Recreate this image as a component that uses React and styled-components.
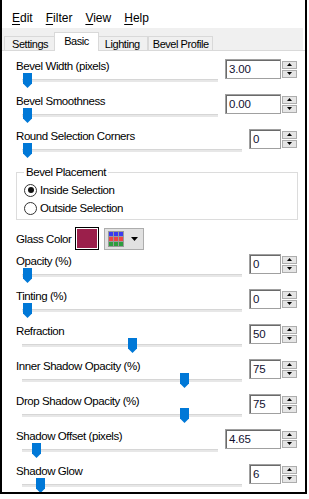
import React from "react";
import styled, { createGlobalStyle } from "styled-components";

const Global = createGlobalStyle`
  html, body { margin: 0; padding: 0; background: #fff; }
  body { font-family: "Liberation Sans", Arial, sans-serif; color: #000; }
`;

const Frame = styled.div`
  width: 307px;
  height: 494px;
  box-sizing: border-box;
  border-left: 2px solid #000;
  border-right: 2px solid #000;
  border-bottom: 2px solid #000;
  background: #fff;
  overflow: hidden;
  display: flex;
  flex-direction: column;
`;

const MenuBar = styled.div`
  display: flex;
  height: 28px;
  box-sizing: border-box;
  padding: 10px 0 0 3.5px;
  font-size: 12px;
  line-height: 16px;
`;

const MenuItem = styled.span`
  padding: 0 6.5px;
  u { text-decoration-thickness: 1px; text-underline-offset: 2px; }
`;

const TabStrip = styled.div`
  display: flex;
  align-items: flex-end;
  height: 22px;
  margin-right: 2px;
  padding-left: 2px;
  box-sizing: border-box;
  background: #f0f0f0;
`;

const Tab = styled.div`
  position: relative;
  box-sizing: border-box;
  height: ${(p) => (p.$active ? 19 : 15)}px;
  margin: 0 ${(p) => (p.$active ? -2 : 0)}px -1px;
  padding: ${(p) =>
    p.$active ? "2px 9px 0" : p.$last ? "1px 3px 0 4px" : "1px 7px 0"};
  border: 1px solid #d9d9d9;
  border-bottom: ${(p) => (p.$active ? "none" : "1px solid #d9d9d9")};
  background: ${(p) => (p.$active ? "#fff" : "#f0f0f0")};
  z-index: ${(p) => (p.$active ? 2 : 1)};
  font-size: 11px;
  letter-spacing: -0.45px;
  line-height: 12px;
  white-space: nowrap;
`;

const Panel = styled.div`
  position: relative;
  z-index: 1;
  flex: 1;
  min-height: 0;
  border-top: 1px solid #d9d9d9;
  padding: 8px 8px 0 14px;
  display: flex;
  flex-direction: column;
`;

const Row = styled.div`
  display: grid;
  grid-template-columns: 1fr auto;
  grid-template-rows: 14px 21px;
  column-gap: 7px;
  flex-shrink: 0;
`;

const Label = styled.div`
  grid-column: 1;
  grid-row: 1;
  font-size: 11.5px;
  letter-spacing: -0.42px;
  line-height: 14px;
  white-space: nowrap;
`;

const SliderArea = styled.div`
  grid-column: 1;
  grid-row: 2;
  position: relative;
  margin-left: 6px;
`;

const Track = styled.div`
  margin-top: 6px;
  height: 3px;
  box-sizing: border-box;
  background: #e7e7e7;
  border-top: 1px solid #d6d6d6;
`;

const ThumbSvg = styled.svg`
  position: absolute;
  top: 0;
  display: block;
`;

const Spin = styled.div`
  grid-column: 2;
  grid-row: 1 / span 2;
  align-self: start;
  display: flex;
  gap: 1px;
  height: 20px;
`;

const SpinField = styled.div`
  width: ${(p) => (p.$wide ? 56 : 32)}px;
  height: 20px;
  box-sizing: border-box;
  border: 1px solid #a0a0a0;
  box-shadow: inset 1px 1px 0 #6a6a6a;
  padding-left: 3px;
  font-size: 11.5px;
  letter-spacing: -0.2px;
  line-height: 19px;
  color: #101030;
`;

const SpinButtons = styled.div`
  display: flex;
  flex-direction: column;
  justify-content: center;
  gap: 1px;
`;

const SpinBtn = styled.div`
  width: 15px;
  height: 8px;
  box-sizing: border-box;
  border: 1px solid #adadad;
  background: #e5e5e5;
  display: flex;
  align-items: center;
  justify-content: center;
`;

const Group = styled.fieldset`
  margin: 1px -1px 0 0;
  padding: 2px 0 2px 7px;
  border: 1px solid #dcdcdc;
  min-width: 0;
  flex-shrink: 0;
`;

const Legend = styled.legend`
  padding: 0 2px;
  font-size: 11.5px;
  letter-spacing: -0.42px;
  line-height: 14px;
`;

const RadioRow = styled.div`
  display: flex;
  align-items: center;
  gap: 3px;
  height: 18px;
  font-size: 11.5px;
  letter-spacing: -0.42px;
`;

const RadioCircle = styled.span`
  width: 13px;
  height: 13px;
  box-sizing: border-box;
  border-radius: 50%;
  border: 1px solid #333;
  background: #fff;
  display: flex;
  align-items: center;
  justify-content: center;
  &::after {
    content: "";
    width: 6px;
    height: 6px;
    border-radius: 50%;
    background: ${(p) => (p.$checked ? "#111" : "transparent")};
  }
`;

const ColorRow = styled.div`
  display: flex;
  align-items: center;
  height: 23px;
  margin-top: 7px;
  margin-bottom: 4px;
  flex-shrink: 0;
`;

const ColorLabel = styled.div`
  width: 59px;
  font-size: 11.5px;
  letter-spacing: -0.42px;
  line-height: 14px;
`;

const Swatch = styled.div`
  width: 24px;
  height: 23px;
  box-sizing: border-box;
  border: 1px solid #000;
  box-shadow: inset 0 0 0 1px #fff;
  background: #9b1f4b;
`;

const PaletteButton = styled.div`
  width: 40px;
  height: 22px;
  margin-left: 5px;
  box-sizing: border-box;
  border: 1px solid #adadad;
  background: #e1e1e1;
  display: flex;
  align-items: center;
  padding-left: 3px;
  gap: 7px;
`;

const PaletteGrid = styled.div`
  display: grid;
  grid-template-columns: repeat(3, 4px);
  grid-template-rows: repeat(3, 4px);
  gap: 1px;
  padding: 1px;
  background: #9a9a9a;
`;

const Cell = styled.span`
  background: ${(p) => p.$c};
`;

const Arrow = ({ up }) => (
  <svg width="5" height="3" viewBox="0 0 5 3">
    <path d={up ? "M0 3 L2.5 0 L5 3 Z" : "M0 0 L5 0 L2.5 3 Z"} fill="#000" />
  </svg>
);

const Thumb = ({ frac }) => (
  <ThumbSvg
    width="9"
    height="15"
    viewBox="0 0 9 15"
    style={{ left: `calc(1px + ${frac} * (100% - 11px))` }}
  >
    <path d="M0 0 H9 V10.5 L4.5 15 L0 10.5 Z" fill="#0078d7" />
  </ThumbSvg>
);

const SliderRow = ({ label, value, wide, frac }) => (
  <Row>
    <Label>{label}</Label>
    <SliderArea>
      <Track />
      <Thumb frac={frac} />
    </SliderArea>
    <Spin>
      <SpinField $wide={wide}>{value}</SpinField>
      <SpinButtons>
        <SpinBtn>
          <Arrow up />
        </SpinBtn>
        <SpinBtn>
          <Arrow />
        </SpinBtn>
      </SpinButtons>
    </Spin>
  </Row>
);

const top = [
  { label: "Bevel Width (pixels)", value: "3.00", wide: true, frac: 0 },
  { label: "Bevel Smoothness", value: "0.00", wide: true, frac: 0 },
  { label: "Round Selection Corners", value: "0", frac: 0 },
];

const bottom = [
  { label: "Opacity (%)", value: "0", frac: 0 },
  { label: "Tinting (%)", value: "0", frac: 0 },
  { label: "Refraction", value: "50", frac: 0.5 },
  { label: "Inner Shadow Opacity (%)", value: "75", frac: 0.75 },
  { label: "Drop Shadow Opacity (%)", value: "75", frac: 0.75 },
  { label: "Shadow Offset (pixels)", value: "4.65", wide: true, frac: 0.0486 },
  { label: "Shadow Glow", value: "6", frac: 0.0625 },
];

const paletteColors = [
  "#3b3bf0", "#3b3bf0", "#3b3bf0",
  "#ee4444", "#ee4444", "#ee4444",
  "#2e9e3e", "#2e9e3e", "#2e9e3e",
];

export default function App() {
  return (
    <>
      <Global />
      <Frame>
        <MenuBar>
          <MenuItem><u>E</u>dit</MenuItem>
          <MenuItem><u>F</u>ilter</MenuItem>
          <MenuItem><u>V</u>iew</MenuItem>
          <MenuItem><u>H</u>elp</MenuItem>
        </MenuBar>
        <TabStrip>
          <Tab>Settings</Tab>
          <Tab $active>Basic</Tab>
          <Tab>Lighting</Tab>
          <Tab $last>Bevel Profile</Tab>
        </TabStrip>
        <Panel>
          {top.map((r) => (
            <SliderRow key={r.label} {...r} />
          ))}
          <Group>
            <Legend>Bevel Placement</Legend>
            <RadioRow>
              <RadioCircle $checked />
              Inside Selection
            </RadioRow>
            <RadioRow>
              <RadioCircle />
              Outside Selection
            </RadioRow>
          </Group>
          <ColorRow>
            <ColorLabel>Glass Color</ColorLabel>
            <Swatch />
            <PaletteButton>
              <PaletteGrid>
                {paletteColors.map((c, i) => (
                  <Cell key={i} $c={c} />
                ))}
              </PaletteGrid>
              <svg width="7" height="4" viewBox="0 0 7 4">
                <path d="M0 0 H7 L3.5 4 Z" fill="#000" />
              </svg>
            </PaletteButton>
          </ColorRow>
          {bottom.map((r) => (
            <SliderRow key={r.label} {...r} />
          ))}
        </Panel>
      </Frame>
    </>
  );
}
